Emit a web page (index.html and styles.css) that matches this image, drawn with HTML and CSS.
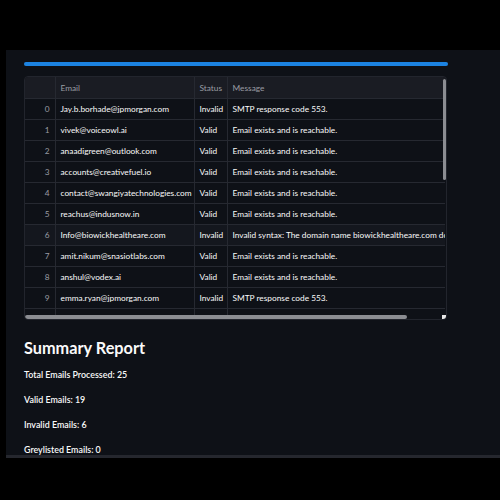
FILE: index.html
```html
<!DOCTYPE html>
<html>
<head>
<meta charset="utf-8">
<link rel="stylesheet" href="styles.css">
</head>
<body>
<div class="app">
  <div class="progress"><div class="progress-fill"></div></div>
  <div class="grid-wrap">
    <table class="grid">
      <colgroup><col class="c-idx"><col class="c-email"><col class="c-status"><col class="c-msg"></colgroup>
      <thead>
        <tr><th></th><th>Email</th><th>Status</th><th>Message</th></tr>
      </thead>
      <tbody>
        <tr><td class="idx">0</td><td>Jay.b.borhade@jpmorgan.com</td><td>Invalid</td><td>SMTP response code 553.</td></tr>
        <tr><td class="idx">1</td><td>vivek@voiceowl.ai</td><td>Valid</td><td>Email exists and is reachable.</td></tr>
        <tr><td class="idx">2</td><td>anaadigreen@outlook.com</td><td>Valid</td><td>Email exists and is reachable.</td></tr>
        <tr><td class="idx">3</td><td>accounts@creativefuel.io</td><td>Valid</td><td>Email exists and is reachable.</td></tr>
        <tr><td class="idx">4</td><td>contact@swangiyatechnologies.com</td><td>Valid</td><td>Email exists and is reachable.</td></tr>
        <tr><td class="idx">5</td><td>reachus@indusnow.in</td><td>Valid</td><td>Email exists and is reachable.</td></tr>
        <tr class="hover"><td class="idx">6</td><td>Info@biowickhealtheare.com</td><td>Invalid</td><td>Invalid syntax: The domain name biowickhealtheare.com does not exist.</td></tr>
        <tr><td class="idx">7</td><td>amit.nikum@snasiotlabs.com</td><td>Valid</td><td>Email exists and is reachable.</td></tr>
        <tr><td class="idx">8</td><td>anshul@vodex.ai</td><td>Valid</td><td>Email exists and is reachable.</td></tr>
        <tr><td class="idx">9</td><td>emma.ryan@jpmorgan.com</td><td>Invalid</td><td>SMTP response code 553.</td></tr>
        <tr><td class="idx">10</td><td>founders@pulsehq.com</td><td>Valid</td><td>Email exists and is reachable.</td></tr>
      </tbody>
    </table>
    <div class="vscroll"></div>
    <div class="hscroll"></div>
    <div class="corner"></div>
  </div>
  <h2 class="title">Summary Report</h2>
  <p class="line">Total Emails Processed: 25</p>
  <p class="line">Valid Emails: 19</p>
  <p class="line">Invalid Emails: 6</p>
  <p class="line">Greylisted Emails: 0</p>
</div>
</body>
</html>
```
FILE: styles.css
```css
html, body {
  margin: 0;
  padding: 0;
  background: #000;
}
body {
  font-family: "Lato", "Liberation Sans", sans-serif;
  color: #fafafa;
}
.app {
  margin: 50px 0 0 6px;
  height: 393px;
  background: #0e1117;
  border-bottom: 3px solid #25272e;
  padding: 12px 53px 0 18px;
  box-sizing: content-box;
  overflow: hidden;
}
.progress {
  height: 4px;
  border-radius: 2px;
  background: #262730;
  margin-right: -1px;
}
.progress-fill {
  height: 100%;
  width: 100%;
  border-radius: 2px;
  background: #1c83e1;
}
.grid-wrap {
  position: relative;
  margin-top: 10px;
  height: 242px;
  border: 1px solid #22252d;
  border-radius: 4px;
  overflow: hidden;
}
.grid {
  border-collapse: collapse;
  table-layout: fixed;
  width: 420px;
  font-size: 8.3px;
}
.c-idx { width: 30px; }
.c-email { width: 139px; }
.c-status { width: 33px; }
.c-msg { width: 218px; }
.grid th, .grid td {
  height: 20px;
  padding: 0 4px 0 5px;
  text-align: left;
  white-space: nowrap;
  overflow: hidden;
  border-right: 1px solid #262931;
  border-bottom: 1px solid #262931;
}
.grid th {
  height: 21px;
  font-weight: 400;
  color: #9a9ca3;
  background: #1a1c23;
}
.grid td:last-child, .grid th:last-child {
  border-right: none;
}
.grid td.idx {
  text-align: right;
  padding-right: 5px;
  color: #9a9ca3;
}
.grid tr.hover td {
  background: #14171e;
}
.vscroll {
  position: absolute;
  right: 0;
  top: 2px;
  width: 3px;
  height: 101px;
  border-radius: 2px;
  background: #8b8d92;
}
.hscroll {
  position: absolute;
  left: 0;
  bottom: 0;
  width: 382px;
  height: 4px;
  border-radius: 2px;
  background: #8b8d92;
}
.corner {
  position: absolute;
  right: 0;
  bottom: 0;
  width: 4px;
  height: 4px;
  background: #e8e8e8;
}
.title {
  margin: 17px 0 0;
  font-size: 16.3px;
  font-weight: 700;
  line-height: 22px;
}
.line {
  margin: 9px 0 0;
  font-size: 8.9px;
  font-weight: 600;
  line-height: 13px;
}
.line + .line {
  margin-top: 12px;
}
```
